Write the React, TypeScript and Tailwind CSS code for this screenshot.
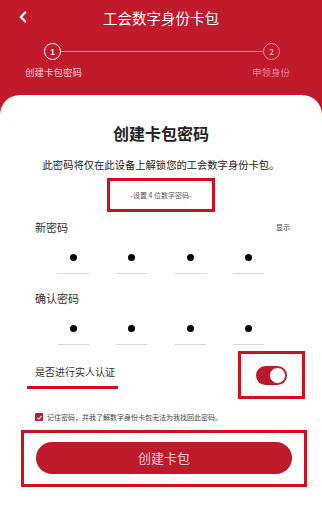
import { ChevronLeft } from 'lucide-react';

const font = { fontFamily: '"Noto Sans CJK SC", "Noto Sans", sans-serif' };

function PinRow() {
  return (
    <div className="flex justify-between px-[58px] pt-[19px]">
      {[0, 1, 2, 3].map((i) => (
        <div key={i} className="flex w-[31px] flex-col items-center">
          <div className="h-[7px] w-[7px] rounded-full bg-black" />
          <div className="mt-[12px] h-px w-full bg-[#d9d9d9]" />
        </div>
      ))}
    </div>
  );
}

export default function App() {
  return (
    <div className="flex h-[527px] w-[322px] flex-col overflow-hidden bg-[#c01a2c]" style={font}>
      <div className="relative flex h-[35px] items-center justify-center">
        <ChevronLeft className="absolute left-[14px] top-[8px] h-[18px] w-[18px] text-white" strokeWidth={3} />
        <span className="text-[14.5px] text-white">工会数字身份卡包</span>
      </div>

      <div className="relative h-[60px]">
        <div className="absolute left-[61px] right-[59px] top-[16px] h-px bg-[#e88a94]" />
        <div className="absolute left-[44px] top-[8px] flex h-[17px] w-[17px] items-center justify-center rounded-full border-[1.5px] border-white bg-[#c01a2c] text-[8px] font-bold text-white">1</div>
        <div className="absolute left-[263px] top-[8px] flex h-[17px] w-[17px] items-center justify-center rounded-full border-[1.5px] border-[#e88a94] bg-[#c01a2c] text-[8px] font-bold text-[#f1b3b9]">2</div>
        <span className="absolute left-[25px] top-[30px] text-[9.5px] text-[#f6d0d4]">创建卡包密码</span>
        <span className="absolute left-[252px] top-[30px] text-[9.5px] text-[#e48893]">申领身份</span>
      </div>

      <div className="flex flex-1 flex-col rounded-t-[20px] bg-white">
        <h1 className="mt-[26px] text-center text-[16px] font-bold leading-[24px] text-[#222]">创建卡包密码</h1>
        <p className="mt-[12px] text-center text-[10.3px] leading-[16px] text-[#222]">此密码将仅在此设备上解锁您的工会数字身份卡包。</p>
        <div className="mx-auto mt-[5px] flex h-[34px] w-[108px] items-center justify-center border-[3px] border-[#d0101e]">
          <span className="text-[7px] text-[#555]">-设置 4 位数字密码-</span>
        </div>

        <div className="mt-[7px] flex items-center justify-between pl-[35px] pr-[32px]">
          <span className="text-[11px] leading-[16px] text-[#333]">新密码</span>
          <span className="text-[7px] text-[#444]">显示</span>
        </div>
        <PinRow />

        <div className="mt-[16px] pl-[35px] text-[11px] leading-[16px] text-[#333]">确认密码</div>
        <PinRow />

        <div className="mt-[6px] flex items-start justify-between pl-[27px] pr-[17px]">
          <div className="pt-[14px]">
            <div className="px-[8px] text-[10px] leading-[14px] text-[#333]">是否进行实人认证</div>
            <div className="mt-[7px] h-[3px] w-[91px] bg-[#c8101e]" />
          </div>
          <div className="flex h-[48px] w-[67px] items-center justify-center border-[3px] border-[#d0101e]">
            <div className="flex h-[19px] w-[31px] items-center justify-end rounded-full bg-[#b81a2a] p-[1px]">
              <div className="h-[17px] w-[17px] rounded-full border border-[#b81a2a] bg-white" />
            </div>
          </div>
        </div>

        <div className="mt-[13px] flex items-center gap-[4px] pl-[35px]">
          <div className="flex h-[8px] w-[8px] items-center justify-center rounded-[1px] bg-[#c01a2c]">
            <svg viewBox="0 0 10 10" className="h-[7px] w-[7px]">
              <path d="M2 5.2 L4.2 7.4 L8.2 2.8" fill="none" stroke="white" strokeWidth="1.6" />
            </svg>
          </div>
          <span className="text-[7px] text-[#444]">记住密码，并我了解数字身份卡包无法为我找回此密码。</span>
        </div>

        <div className="ml-[21px] mt-[7px] flex h-[57px] w-[286px] items-center justify-center border-[3px] border-[#d0101e]">
          <button className="h-[32px] w-[256px] rounded-full bg-[#bd1b2c] text-[13px] text-[#f6c9cf]">创建卡包</button>
        </div>
      </div>
    </div>
  );
}
